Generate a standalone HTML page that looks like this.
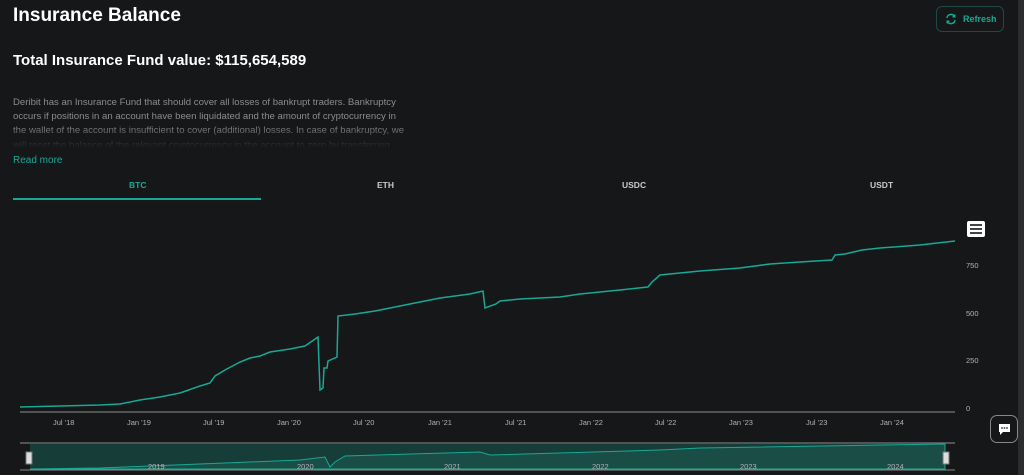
<!DOCTYPE html>
<html><head><style>
body{margin:0;width:1024px;height:475px;background:#151719;font-family:"Liberation Sans",sans-serif;overflow:hidden;position:relative;color:#fff}
.sb{position:absolute;right:0;top:0;width:6px;height:475px;background:#2a2c2e}
h1{position:absolute;left:13px;top:5px;margin:0;font-size:19px;font-weight:bold}
h2{position:absolute;left:13px;top:52px;margin:0;font-size:15px;font-weight:bold}
.desc{position:absolute;left:13px;top:96px;width:395px;font-size:9.6px;line-height:14.2px;color:#8a8d90;height:52px;overflow:hidden;-webkit-mask-image:linear-gradient(#000 55%,transparent)}
.rm{position:absolute;left:13px;top:155px;font-size:10px;color:#17a995}
.btn{position:absolute;left:936px;top:6px;width:68px;height:26px;border:1px solid #1d4a44;border-radius:6px;box-sizing:border-box;color:#17a995;font-size:9px;font-weight:bold;line-height:24px;padding-left:26px}
.tab{position:absolute;top:180px;font-size:8.5px;font-weight:bold;color:#c8cacc}
.ul{position:absolute;left:13px;top:198px;width:248px;height:2px;background:#17a995}
.ax{position:absolute;font-size:7.5px;color:#b0b2b4}
.menu{position:absolute;left:967px;top:221px;width:18px;height:16px;background:#fff;border-radius:2px}
.menu i{position:absolute;left:3px;width:12px;height:2px;background:#444}
.chat{position:absolute;left:990px;top:415px;width:28px;height:28px;border:1px solid #888;border-radius:7px;box-sizing:border-box;background:#151719}
</style></head><body>
<div class="sb"></div>
<h1>Insurance Balance</h1>
<h2>Total Insurance Fund value: $115,654,589</h2>
<div class="desc">Deribit has an Insurance Fund that should cover all losses of bankrupt traders. Bankruptcy occurs if positions in an account have been liquidated and the amount of cryptocurrency in the wallet of the account is insufficient to cover (additional) losses. In case of bankruptcy, we will reset the balance of the relevant cryptocurrency in the account to zero by transferring</div>
<div class="rm">Read more</div>
<div class="btn"><svg style="position:absolute;left:8px;top:6px" width="12" height="12" viewBox="0 0 12 12" fill="none" stroke="#17a995" stroke-width="1.4"><path d="M2 5A4 4 0 0 1 9.5 3.5M10 7A4 4 0 0 1 2.5 8.5"/><path d="M9.8 1.5v2.3H7.5M2.2 10.5V8.2h2.3"/></svg>Refresh</div>
<div class="tab" style="left:129px;color:#17a995">BTC</div>
<div class="tab" style="left:377px">ETH</div>
<div class="tab" style="left:622px">USDC</div>
<div class="tab" style="left:870px">USDT</div>
<div class="ul"></div>
<div class="menu"><i style="top:3px"></i><i style="top:7px"></i><i style="top:11px"></i></div>
<div class="ax" style="left:966px;top:261px">750</div>
<div class="ax" style="left:966px;top:309px">500</div>
<div class="ax" style="left:966px;top:356px">250</div>
<div class="ax" style="left:966px;top:404px">0</div>
<svg style="position:absolute;left:0;top:0" width="1024" height="475">
<line x1="20" y1="412" x2="955" y2="412" stroke="#777" stroke-width="1.2"/>
<polyline fill="none" stroke="#17a995" stroke-width="1.5" points="20,407 60,406 100,405 120,404 140,400 160,397 180,393 200,386 210,383 215,376 225,370 240,362 250,358 260,356 270,352 290,349 305,346 318,337 320,390 323,388 324,368 327,368 328,361 337,357 338,316 355,314 375,311 390,308 420,302 440,298 470,294 483,291 485,308 496,304 500,301 520,299 560,297 580,294 600,292 620,290 648,287 652,282 660,275 700,271 740,268 770,264 800,262 832,260 835,255 845,254 862,250 880,248 920,245 955,241"/>
<line x1="20" y1="443" x2="955" y2="443" stroke="#777" stroke-width="1.2"/>
<rect x="30" y="444" width="915" height="26" fill="#173d39"/>
<polyline fill="#1b4d47" stroke="#17a995" stroke-width="1" points="30,469 100,468 200,464 300,460 325,457 330,467 335,462 345,456 480,452 490,455 660,450 700,448 945,444 945,469 30,469"/>
<line x1="20" y1="470" x2="955" y2="470" stroke="#888"/>
<rect x="26" y="452" width="6" height="12" fill="#ddd" stroke="#777"/>
<rect x="943" y="452" width="6" height="12" fill="#ddd" stroke="#777"/>
<g font-size="7.5" fill="#b0b2b4" font-family="Liberation Sans">
<text x="53" y="425">Jul '18</text><text x="127" y="425">Jan '19</text><text x="203" y="425">Jul '19</text><text x="277" y="425">Jan '20</text><text x="353" y="425">Jul '20</text><text x="428" y="425">Jan '21</text><text x="505" y="425">Jul '21</text><text x="579" y="425">Jan '22</text><text x="655" y="425">Jul '22</text><text x="729" y="425">Jan '23</text><text x="806" y="425">Jul '23</text><text x="880" y="425">Jan '24</text>
<text x="148" y="469">2019</text><text x="297" y="469">2020</text><text x="444" y="469">2021</text><text x="592" y="469">2022</text><text x="740" y="469">2023</text><text x="887" y="469">2024</text>
</g>
</svg>
<div class="chat"><svg style="position:absolute;left:7px;top:7px" width="13" height="13" viewBox="0 0 13 13"><path d="M1 1h11v8H5l-3 3V9H1z" fill="#fff"/><circle cx="4" cy="5" r="0.9" fill="#333"/><circle cx="6.5" cy="5" r="0.9" fill="#333"/><circle cx="9" cy="5" r="0.9" fill="#333"/></svg></div>
</body></html>
